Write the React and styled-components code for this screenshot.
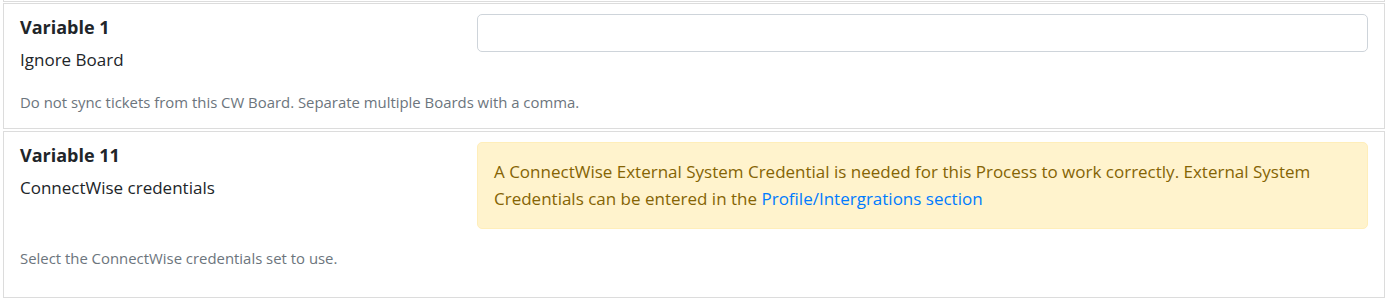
import React from "react";
import styled, { createGlobalStyle } from "styled-components";

const GlobalStyle = createGlobalStyle`
  body {
    margin: 0;
    background: #ffffff;
    font-family: "Open Sans", "Noto Sans", sans-serif;
    color: #212529;
  }
`;

const Page = styled.div`
  padding: 0 3px 0 3px;
`;

const CardStub = styled.div`
  height: 1px;
  border: 1px solid #dcdcdc;
  border-top: none;
  margin-bottom: 1px;
`;

const Card = styled.div`
  border: 1px solid #dcdcdc;
  padding: 10px 16px ${(p) => p.$bottom || 15}px 16px;
  margin-bottom: 2px;
`;

const Row = styled.div`
  display: grid;
  grid-template-columns: 457px 1fr;
  align-items: start;
`;

const Labels = styled.div`
  padding-top: 1px;
`;

const Title = styled.div`
  font-size: 18px;
  font-weight: 700;
  line-height: 24px;
  margin-bottom: 9px;
`;

const Name = styled.div`
  font-size: 17px;
  line-height: 24px;
`;

const Input = styled.input`
  box-sizing: border-box;
  width: 100%;
  height: 38px;
  border: 1px solid #ced4da;
  border-radius: 5px;
  background: #fff;
  padding: 6px 12px;
  font-family: inherit;
  font-size: 16px;
`;

const Alert = styled.div`
  border: 1px solid #ffeeba;
  background: #fff3cd;
  color: #856404;
  border-radius: 5px;
  padding: 15px 16px 16px;
  font-size: 17px;
  line-height: 27px;
`;

const Link = styled.a`
  color: #007bff;
  text-decoration: none;
`;

const Help = styled.div`
  margin-top: ${(p) => p.$gap || 20}px;
  font-size: 14.9px;
  line-height: 21px;
  color: #6c757d;
`;

export default function App() {
  return (
    <>
      <GlobalStyle />
      <Page>
        <CardStub />
        <Card>
          <Row>
            <Labels>
              <Title>Variable 1</Title>
              <Name>Ignore Board</Name>
            </Labels>
            <Input type="text" />
          </Row>
          <Help>Do not sync tickets from this CW Board. Separate multiple Boards with a comma.</Help>
        </Card>
        <Card $bottom={28}>
          <Row>
            <Labels>
              <Title>Variable 11</Title>
              <Name>ConnectWise credentials</Name>
            </Labels>
            <Alert>
              A ConnectWise External System Credential is needed for this Process to work correctly. External System
              Credentials can be entered in the <Link href="#">Profile/Intergrations section</Link>
            </Alert>
          </Row>
          <Help $gap={19}>Select the ConnectWise credentials set to use.</Help>
        </Card>
      </Page>
    </>
  );
}
